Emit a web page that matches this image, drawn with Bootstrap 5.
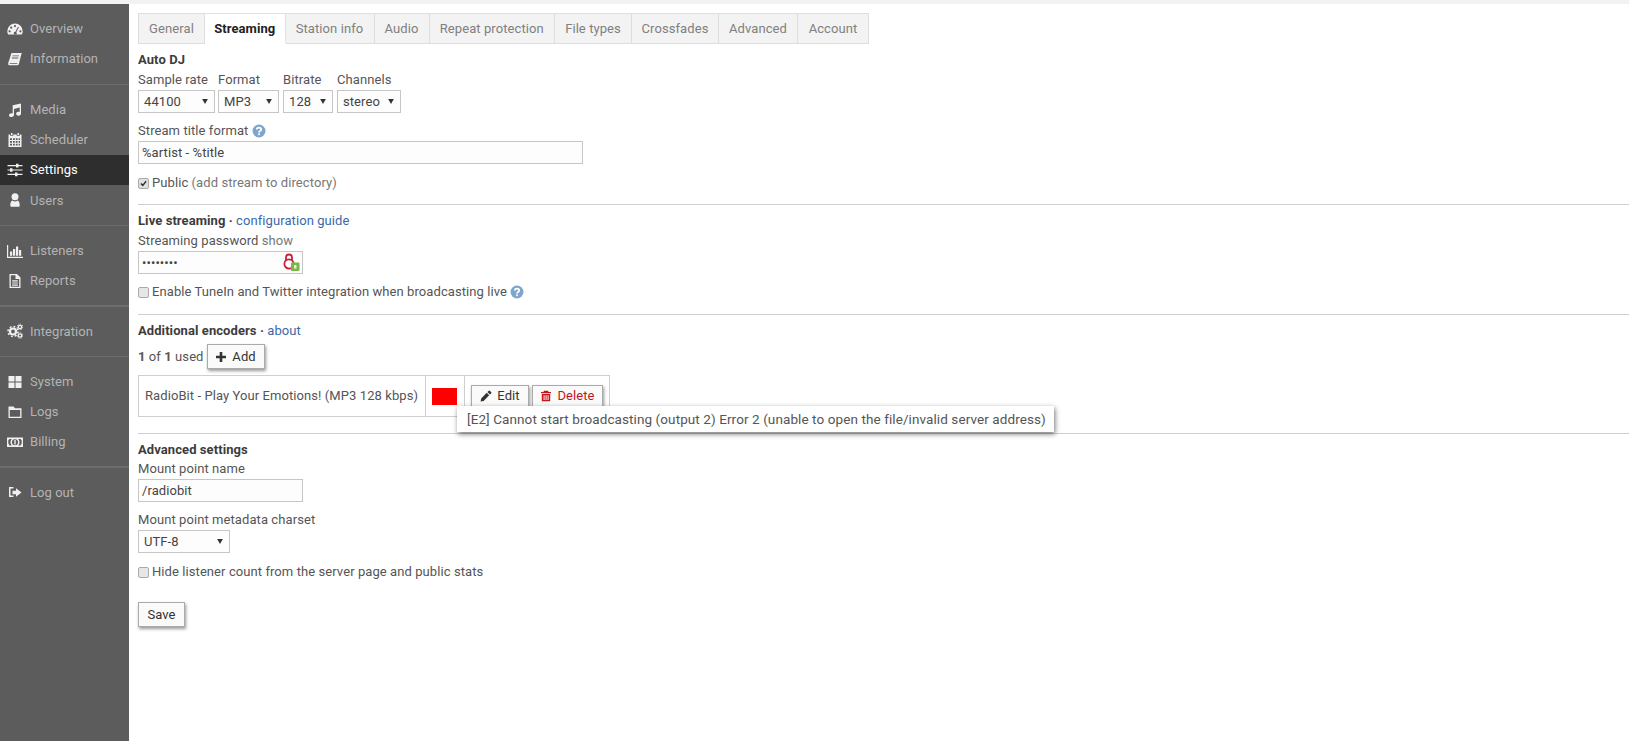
<!DOCTYPE html>
<html lang="en">
<head>
<meta charset="utf-8">
<title>Streaming settings</title>
<link href="https://cdn.jsdelivr.net/npm/bootstrap@5.3.0/dist/css/bootstrap.min.css" rel="stylesheet">
<style>
html,body{height:100%;}
body{margin:0;font-family:Roboto,"Liberation Sans",sans-serif;font-size:13px;letter-spacing:.08px;color:#555;background:#fff;overflow:hidden;}
.shell{height:741px;border-top:4px solid #f2f2f2;}
.side{width:129px;flex:none;background:#5c5c5c;padding-top:9.800px;}
.side-link{display:flex;align-items:center;height:30.300px;color:#b4b4b4;font-size:13px;letter-spacing:.05px;text-decoration:none;padding-left:7px;}
.side-link svg{width:16px;height:16px;flex:none;margin-right:7px;color:#f0f0f0;fill:currentColor;}
.side-link.on{background:#2e2e2e;color:#fff;}
.side-sep{height:1.500px;background:#6d6d6d;margin:9.200px 0 9.300px;}
.pane{flex:1;min-width:0;padding:9px 0 0 9px;}
.tabs-row{width:731px;height:31px;flex-wrap:nowrap;border:0;margin-bottom:6px;}
.tabs-row .nav-link{height:31px;padding:0;display:flex;align-items:center;justify-content:center;border:1px solid #dedede;border-left-width:0;border-radius:0;background:#f3f3f3;color:#808080;font-size:13px;margin:0;}
.tabs-row .nav-item:first-child .nav-link{border-left-width:1px;}
.tabs-row .nav-link.active{background:#fff;color:#222;font-weight:700;border-bottom-color:#fff;}
.ttl{height:20px;line-height:20px;font-weight:700;color:#3c3c3c;}
.ttl a,.lnk{color:#3d68a8;font-weight:400;text-decoration:none;}
.lbl{display:block;height:20px;line-height:20px;margin:0;color:#555;white-space:nowrap;}
.muted{color:#777;}
.ctl{height:23px;border:1px solid #c6c6c6;border-radius:0;background-color:#fdfdfd;color:#444;font-size:13px;letter-spacing:.08px;padding:0 2px 0 3px;line-height:21px;box-shadow:none;}
.ctl.form-select{padding:0 14px 0 5px;background-position:right 6px center;background-size:6px 5px;background-image:url("data:image/svg+xml,%3Csvg xmlns='http://www.w3.org/2000/svg' viewBox='0 0 8 7'%3E%3Cpath fill='%23333' d='M0 0h8L4 7z'/%3E%3C/svg%3E");}
.w-t{width:445px;}
.w-s{width:165px;}
.chk-row{height:20px;line-height:20px;display:flex;align-items:center;gap:3px;white-space:nowrap;}
.chk-row .form-check-input{width:11px;height:11px;margin:0;border:1px solid #aaa;border-radius:2px;background-color:#e6e6e6;background-size:100%;box-shadow:none;}
.chk-row .form-check-input:checked{background-color:#e0e0e0;border-color:#aaa;background-image:url("data:image/svg+xml,%3Csvg xmlns='http://www.w3.org/2000/svg' viewBox='0 0 12 12'%3E%3Cpath fill='none' stroke='%23333' stroke-width='2' d='M2.500 6l2.500 2.500L9.500 3'/%3E%3C/svg%3E");}
.rule{margin:0;border:0;border-top:1px solid #cfcfcf;opacity:1;}
.plainbtn{border:1px solid #aaa;border-radius:0;background:#fafafa;color:#333;font-size:13px;letter-spacing:.08px;padding:0;height:25px;display:inline-flex;align-items:center;justify-content:center;gap:5px;box-shadow:1px 2px 3px rgba(0,0,0,.4);}
.plainbtn svg{width:12px;height:12px;fill:currentColor;}
.danger{color:#c8151b;}
.helpic{width:14px;height:14px;vertical-align:-3px;}
.enc{width:472px;height:42px;border-collapse:collapse;margin:0;}
.enc td{border:1px solid #cfcfcf;padding:0;vertical-align:middle;color:#555;white-space:nowrap;}
.swatch{display:block;width:25px;height:17px;background:#f00;margin-left:6px;}
.tip{position:absolute;left:319px;top:31px;width:597px;height:26px;line-height:26px;background:#fff;color:#555;font-size:13.500px;letter-spacing:.09px;padding-left:10px;white-space:nowrap;box-shadow:1px 2px 5px rgba(0,0,0,.55);z-index:5;}
.lock{position:absolute;right:1px;top:1px;width:20px;height:21px;}
</style>
</head>
<body>
<svg width="0" height="0" class="position-absolute">
<symbol id="i-gauge" viewBox="0 0 16 16"><path fill-rule="evenodd" d="M8 2.500A7.700 7.700 0 0 0 .3 10.200c0 1.300.3 2.400.9 3.300h13.600c.6-.9.9-2 .9-3.300A7.700 7.700 0 0 0 8 2.500zM8 4a1.100 1.100 0 1 1 0 2.200A1.100 1.100 0 0 1 8 4zM4.200 5.600a1.100 1.100 0 1 1 0 2.200 1.100 1.100 0 0 1 0-2.200zM2.600 9.200a1.100 1.100 0 1 1 0 2.200 1.100 1.100 0 0 1 0-2.200zm10.800 0a1.100 1.100 0 1 1 0 2.200 1.100 1.100 0 0 1 0-2.200zM11 5.800l.9.4-2.600 5a1.500 1.500 0 1 1-.9-.4z"/></symbol>
<symbol id="i-book" viewBox="0 0 16 16"><path d="M4.500 2H15l-.6 1-2.600 10.200c-.2.7-.7 1-1.400 1H2.600c-1 0-1.600-.8-1.400-1.800l.2-.9zM5.600 4.400l-.2.9h6.400l.2-.9zm-.6 2.200l-.2.9h6.400l.2-.9z"/><path fill="#5c5c5c" d="M2.800 12.300h7.600l-.2.8H2.600z"/></symbol>
<symbol id="i-music" viewBox="0 0 16 16"><path d="M14 1.500v10.200c0 1.300-1.300 2-2.500 2s-2.400-.7-2.400-1.900 1.200-2 2.400-2c.5 0 .9.100 1.200.3V5.600L7 7v6.100c0 1.300-1.300 2-2.500 2S2 14.400 2 13.200s1.200-2 2.500-2c.4 0 .9.100 1.200.3V3.200z"/></symbol>
<symbol id="i-cal" viewBox="0 0 16 16"><path fill-rule="evenodd" d="M4 1h1.500v2H4zM10.500 1H12v2h-1.500zM1.500 2.500H3.200v1.300h3.100V2.500h3.400v1.300h3.100V2.500h1.700v12.500h-13zM3 6.200v1.800h2V6.200zm3 0v1.800h1.800V6.200zm2.800 0v1.800h1.800V6.200zm2.800 0v1.800H13V6.200zM3 9v1.800h2V9zm3 0v1.800h1.800V9zm2.800 0v1.800h1.800V9zm2.800 0v1.800H13V9zM3 11.800v1.800h2v-1.800zm3 0v1.800h1.800v-1.800zm2.800 0v1.800h1.800v-1.800zm2.800 0v1.800H13v-1.800z"/></symbol>
<symbol id="i-sliders" viewBox="0 0 16 16"><path d="M.5 3h8.500V1.800h2.500V3h4v1.200h-4v1.300H9V4.200H.5zM.5 7.400h2.500V6.300h2.500v1.100h10v1.200h-10v1.200H3V8.600H.5zM.5 11.800h7.500v-1.200h2.500v1.200h5V13h-5v1.200H8V13H.5z"/></symbol>
<symbol id="i-user" viewBox="0 0 16 16"><circle cx="8" cy="4.800" r="3.500"/><path d="M4.500 14.800c-.7 0-1.200-.5-1.200-1.300 0-2.700.8-5 2.200-5 .6.500 1.500.9 2.500.9s1.900-.4 2.500-.9c1.400 0 2.200 2.300 2.200 5 0 .8-.5 1.300-1.200 1.300z"/></symbol>
<symbol id="i-bars" viewBox="0 0 16 16"><path d="M0 2h1.200v11.800H16V15H0zM3 8.500h2.200v4.300H3zM6 6h2.200v6.800H6zM9 3.500h2.200v9.300H9zM12 7h2.200v5.800H12z"/></symbol>
<symbol id="i-file" viewBox="0 0 16 16"><path fill-rule="evenodd" d="M2.500 1h7.500l3.500 3.500V15h-11zM3.800 2.300v11.400h8.400V6H8.500V2.300zM5.200 7.200h5.600v1.200H5.200zm0 2.200h5.600v1.200H5.200zm0 2.200h5.600v1.200H5.200z"/></symbol>
<symbol id="i-cogs" viewBox="0 0 16 16"><circle cx="6" cy="8.500" r="3" fill="none" stroke="currentColor" stroke-width="2.200"/><circle cx="6" cy="8.500" r="5" fill="none" stroke="currentColor" stroke-width="1.500" stroke-dasharray="1.900 2"/><circle cx="13" cy="4" r="1.700" fill="none" stroke="currentColor" stroke-width="1.300"/><circle cx="13" cy="4" r="2.800" fill="none" stroke="currentColor" stroke-width="1" stroke-dasharray="1.200 1.300"/><circle cx="13" cy="12.500" r="1.700" fill="none" stroke="currentColor" stroke-width="1.300"/><circle cx="13" cy="12.500" r="2.800" fill="none" stroke="currentColor" stroke-width="1" stroke-dasharray="1.200 1.300"/></symbol>
<symbol id="i-grid" viewBox="0 0 16 16"><path d="M1.500 2h6v5.500h-6zM8.500 2h6v5.500h-6zM1.500 8.500h6V14h-6zM8.500 8.500h6V14h-6z"/></symbol>
<symbol id="i-folder" viewBox="0 0 16 16"><path fill-rule="evenodd" d="M1.500 2.500h5l1.500 1.800h6.500V14h-13zM2.800 6v6.700h10.400V6z"/></symbol>
<symbol id="i-money" viewBox="0 0 16 16"><path fill-rule="evenodd" d="M0 3.500h16v9.500H0zM2.500 5L1.300 6.200v3.100L2.500 11.500h2.300C4 10.600 3.500 9.500 3.500 8.200s.5-2.300 1.300-3.200zm8.700 0c.8.900 1.300 1.900 1.300 3.200s-.5 2.400-1.300 3.300h2.300l1.200-2.200V6.200L13.500 5zM8 5.200a3 3 0 1 0 0 6 3 3 0 0 0 0-6z"/><path d="M7.300 6h1.400v4.500H7.300z"/></symbol>
<symbol id="i-out" viewBox="0 0 16 16"><path d="M2 3h4.500v1.500H3.500v7h3V13H2z"/><path d="M9 4.200l5.500 4.300L9 12.800v-2.500H5.500V6.700H9z"/></symbol>
<symbol id="i-pencil" viewBox="0 0 12 12"><path d="M8.600.9a1 1 0 0 1 1.400 0l1.100 1.100a1 1 0 0 1 0 1.400l-1.200 1.200-2.500-2.500zM6.700 2.800l2.500 2.500-5.600 5.600-3 .6.600-3z"/></symbol>
<symbol id="i-trash" viewBox="0 0 12 12"><path fill-rule="evenodd" d="M4 .8h4l.6 1.200h2.400v1.300H1V2h2.400zM1.800 4h8.400v7.200H1.800zM3.600 5.200v4.800h1V5.200zm2 0v4.800h1V5.200zm2 0v4.800h1V5.200z"/></symbol>
<symbol id="i-help" viewBox="0 0 14 14"><circle cx="7" cy="7" r="6.500" fill="#7ea6cc"/><path fill="none" stroke="#fff" stroke-width="1.700" d="M4.800 5.400c0-1.200 1-1.800 2.200-1.800s2.200.7 2.200 1.800c0 1.500-2.200 1.600-2.200 3.100"/><rect x="6.100" y="9.400" width="1.800" height="1.700" fill="#fff"/></symbol>
</svg>

<div class="shell d-flex">
  <nav class="side d-flex flex-column">
    <a class="side-link" href="#"><svg><use href="#i-gauge"/></svg>Overview</a>
    <a class="side-link" href="#"><svg><use href="#i-book"/></svg>Information</a>
    <div class="side-sep"></div>
    <a class="side-link" href="#"><svg><use href="#i-music"/></svg>Media</a>
    <a class="side-link" href="#"><svg><use href="#i-cal"/></svg>Scheduler</a>
    <a class="side-link on" href="#"><svg><use href="#i-sliders"/></svg>Settings</a>
    <a class="side-link" href="#"><svg><use href="#i-user"/></svg>Users</a>
    <div class="side-sep"></div>
    <a class="side-link" href="#"><svg><use href="#i-bars"/></svg>Listeners</a>
    <a class="side-link" href="#"><svg><use href="#i-file"/></svg>Reports</a>
    <div class="side-sep"></div>
    <a class="side-link" href="#"><svg><use href="#i-cogs"/></svg>Integration</a>
    <div class="side-sep"></div>
    <a class="side-link" href="#"><svg><use href="#i-grid"/></svg>System</a>
    <a class="side-link" href="#"><svg><use href="#i-folder"/></svg>Logs</a>
    <a class="side-link" href="#"><svg><use href="#i-money"/></svg>Billing</a>
    <div class="side-sep"></div>
    <a class="side-link" href="#"><svg><use href="#i-out"/></svg>Log out</a>
  </nav>

  <main class="pane">
    <ul class="nav nav-tabs tabs-row">
      <li class="nav-item" style="width:67px"><a class="nav-link" href="#">General</a></li>
      <li class="nav-item" style="width:80.500px"><a class="nav-link active" href="#">Streaming</a></li>
      <li class="nav-item" style="width:89px"><a class="nav-link" href="#">Station info</a></li>
      <li class="nav-item" style="width:55px"><a class="nav-link" href="#">Audio</a></li>
      <li class="nav-item" style="width:125.500px"><a class="nav-link" href="#">Repeat protection</a></li>
      <li class="nav-item" style="width:77px"><a class="nav-link" href="#">File types</a></li>
      <li class="nav-item" style="width:87px"><a class="nav-link" href="#">Crossfades</a></li>
      <li class="nav-item" style="width:79px"><a class="nav-link" href="#">Advanced</a></li>
      <li class="nav-item" style="width:71px"><a class="nav-link" href="#">Account</a></li>
    </ul>

    <div class="ttl">Auto DJ</div>
    <div class="d-flex">
      <div style="width:80px"><label class="lbl">Sample rate</label><select class="form-select ctl" style="width:77px"><option>44100</option></select></div>
      <div style="width:65px"><label class="lbl">Format</label><select class="form-select ctl" style="width:61px"><option>MP3</option></select></div>
      <div style="width:54px"><label class="lbl">Bitrate</label><select class="form-select ctl" style="width:50px"><option>128</option></select></div>
      <div><label class="lbl">Channels</label><select class="form-select ctl" style="width:64px"><option>stereo</option></select></div>
    </div>
    <label class="lbl mt-2">Stream title format <svg class="helpic"><use href="#i-help"/></svg></label>
    <input class="form-control ctl w-t d-block" type="text" value="%artist - %title">
    <div class="chk-row" style="margin-top:9px"><input class="form-check-input" type="checkbox" checked><span>Public <span class="muted">(add stream to directory)</span></span></div>
    <hr class="rule" style="margin-top:11px;margin-bottom:6px">

    <div class="ttl">Live streaming · <a href="#">configuration guide</a></div>
    <label class="lbl">Streaming password <span class="muted">show</span></label>
    <div class="position-relative w-s">
      <input class="form-control ctl w-100" type="password" value="12345678">
      <svg class="lock" viewBox="0 0 20 21"><path fill="none" stroke="#c8213a" stroke-width="1.800" d="M4 8V5.500a3 3 0 0 1 6 0V8"/><circle cx="7" cy="12" r="4.600" fill="none" stroke="#c8213a" stroke-width="1.800"/><rect x="9" y="10.500" width="8.500" height="8.500" rx="1" fill="#7ab648"/><rect x="12" y="13" width="2.500" height="3.500" fill="#e8f5d8"/></svg>
    </div>
    <div class="chk-row" style="margin-top:8px"><input class="form-check-input" type="checkbox"><span>Enable TuneIn and Twitter integration when broadcasting live <svg class="helpic"><use href="#i-help"/></svg></span></div>
    <hr class="rule" style="margin-top:12px;margin-bottom:6px">

    <div class="ttl">Additional encoders · <a href="#">about</a></div>
    <div class="d-flex align-items-center gap-1" style="margin-top:3px;margin-bottom:6px">
      <span><b>1</b> of <b>1</b> used</span>
      <button class="btn plainbtn" type="button" style="width:58px;margin-left:-1px"><svg viewBox="0 0 12 12"><path d="M4.700 1h2.600v3.700H11v2.600H7.300V11H4.700V7.300H1V4.700h3.700z"/></svg>Add</button>
    </div>
    <div class="position-relative">
      <table class="enc">
        <tr>
          <td style="width:287px;padding-left:6px">RadioBit - Play Your Emotions! (MP3 128 kbps)</td>
          <td style="width:39px"><span class="swatch"></span></td>
          <td><div class="d-flex" style="padding-left:6px;gap:3px">
            <button class="btn plainbtn" type="button" style="width:58px;height:22px"><svg><use href="#i-pencil"/></svg>Edit</button>
            <button class="btn plainbtn danger" type="button" style="width:71px;height:22px"><svg><use href="#i-trash"/></svg>Delete</button>
          </div></td>
        </tr>
      </table>
      <div class="tip">[E2] Cannot start broadcasting (output 2) Error 2 (unable to open the file/invalid server address)</div>
    </div>
    <hr class="rule" style="margin-top:16px;margin-bottom:6px">

    <div class="ttl" style="height:19px">Advanced settings</div>
    <label class="lbl">Mount point name</label>
    <input class="form-control ctl w-s d-block" type="text" value="/radiobit">
    <label class="lbl" style="margin-top:8px;height:20px">Mount point metadata charset</label>
    <select class="form-select ctl" style="width:92px"><option>UTF-8</option></select>
    <div class="chk-row" style="margin-top:9px"><input class="form-check-input" type="checkbox"><span>Hide listener count from the server page and public stats</span></div>
    <button class="btn plainbtn" type="button" style="width:47px;margin-top:20px">Save</button>
  </main>
</div>
<script src="https://cdn.jsdelivr.net/npm/bootstrap@5.3.0/dist/js/bootstrap.bundle.min.js"></script>
</body>
</html>
